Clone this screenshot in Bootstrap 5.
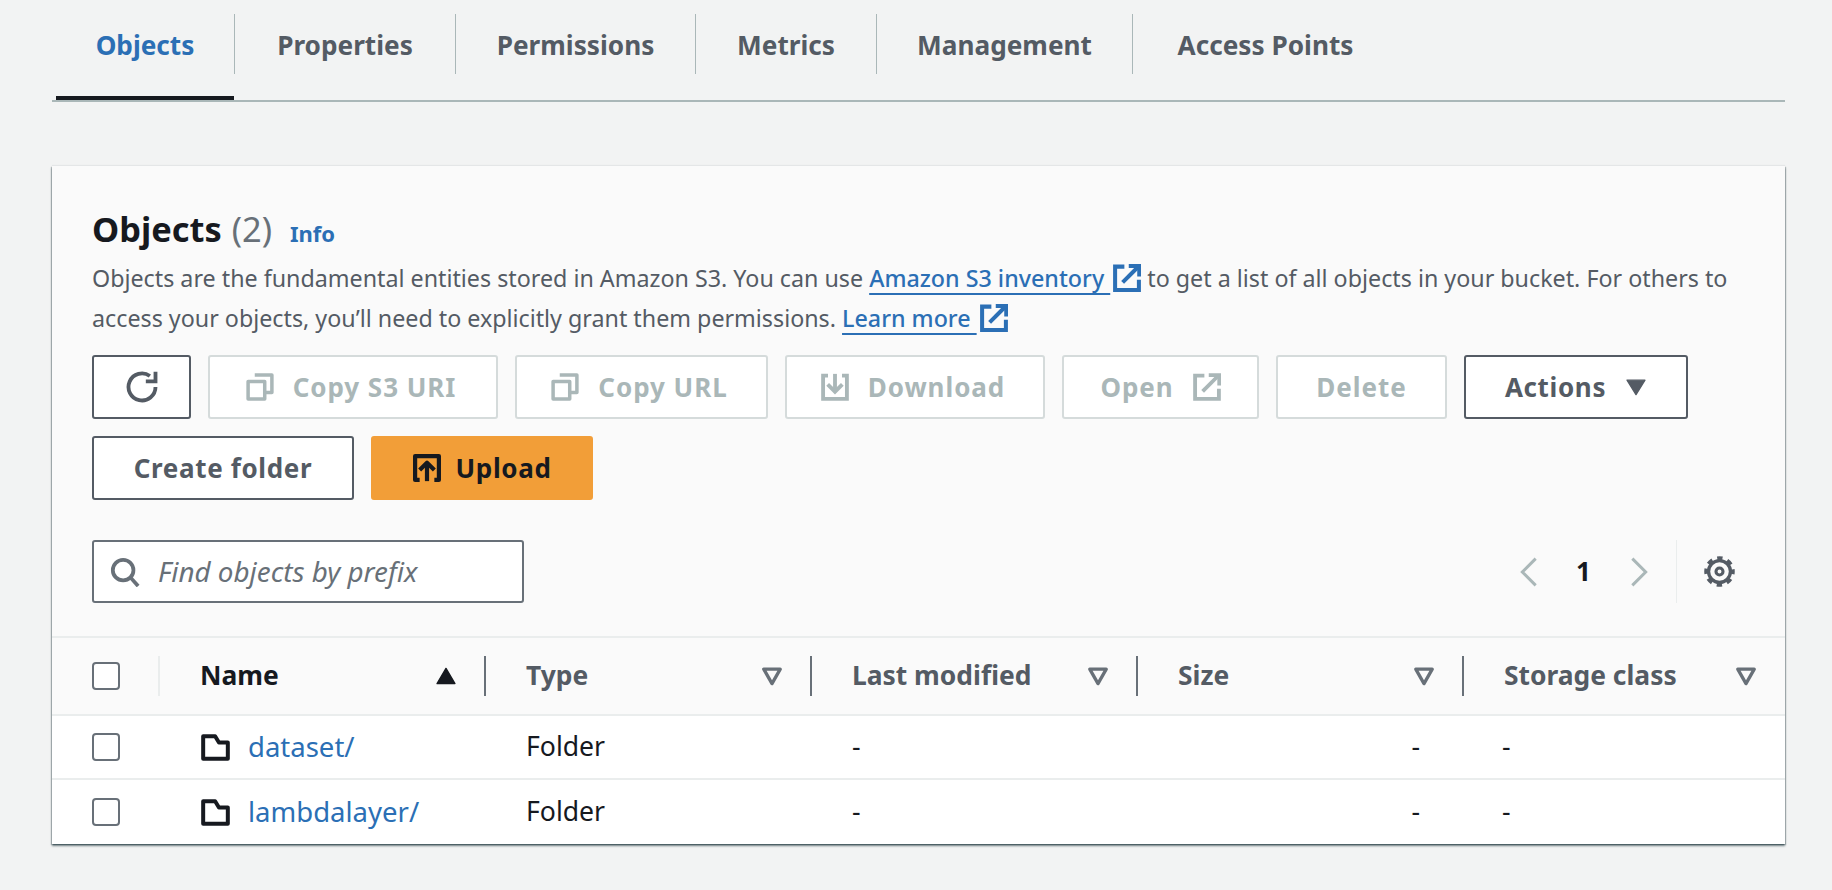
<!DOCTYPE html>
<html lang="en"><head><meta charset="utf-8"><title>Objects</title>
<link href="https://cdn.jsdelivr.net/npm/bootstrap@5.3.0/dist/css/bootstrap.min.css" rel="stylesheet">
<style>
:root{--ink:#16191f;--sub:#545b64;--mute:#687078;--off:#aab7b8;--off2:#d5dbdb;--blue:#2b6fb5;--rule:#eaeded;}
html,body{height:100%}
body{background:#f2f3f3;font-family:"Noto Sans","Open Sans",sans-serif;color:var(--ink);font-size:23px;overflow:hidden}
.shell{padding:14px 47px 0 52px}
.tabbar{border-bottom:2px solid var(--off);height:88px;align-items:flex-start;padding-left:4px;flex-wrap:nowrap}
.tabitem{height:60px;padding-top:4px;display:flex;align-items:center;justify-content:center;border-right:1.5px solid var(--off);font-weight:700;font-size:26.2px;color:var(--sub);text-decoration:none;position:relative}
.tabitem:last-child{border-right:0}
.tabitem.on{color:var(--blue)}
.tabitem.on::after{content:"";position:absolute;left:0;right:0;top:82px;height:4px;background:var(--ink)}
.t1{width:179px}.t2{width:221px}.t3{width:240px}.t4{width:181px}.t5{width:256px}.t6{width:265px}
.panel{margin-top:64px;background:#fafafa;border:0;border-radius:0;box-shadow:0 2px 2px 0 rgba(0,28,36,.5),1px 1px 1px 0 rgba(0,28,36,.22),-1px 1px 1px 0 rgba(0,28,36,.22),0 -1px 1px 0 rgba(0,28,36,.05)}
.phead{padding:38px 40px 0}
.ptitle{font-size:34.4px;font-weight:700;line-height:50px;margin:0;display:flex;align-items:baseline}
.ptitle .cnt{font-weight:400;color:var(--mute);margin-left:10px}
.ptitle a{font-size:22px;font-weight:700;color:var(--blue);text-decoration:none;margin-left:18px}
.pdesc{font-size:23.28px;line-height:40px;color:var(--sub);margin:0}
.lnk{color:var(--blue);text-decoration:none;font-weight:500;white-space:nowrap}
.lnk .ul{text-decoration:underline;text-decoration-thickness:2px;text-underline-offset:6px;text-decoration-skip-ink:none}
.ext{width:28px;height:28px;color:var(--blue);vertical-align:-5px;margin-left:3px}
.bars{gap:17px 17px;margin-top:17px;width:1640px}
.gbtn{height:64px;border:2px solid var(--sub);border-radius:3px;background:#fff;color:var(--sub);font-weight:700;font-size:26px;letter-spacing:.65px;display:flex;align-items:center;justify-content:center;gap:19px;padding:0;--bs-btn-hover-bg:#fff;white-space:nowrap}
.gbtn svg{width:28px;height:28px;flex:none}
.gbtn .spin{width:36px;height:36px}
.gbtn .drop{width:22px;height:22px}
.gbtn:disabled{border-color:var(--off2);color:var(--off);opacity:1;background:#fff;letter-spacing:.95px}
.gbtn.go{background:#f29e38;border-color:#f29e38;color:var(--ink);gap:15px}
.b1{width:99px}.b2{width:290px;padding-right:4px}.b3{width:253px;padding-right:4px}.b4{width:260px;padding-right:4px}.b5{width:197px}.b6{width:171px}.b7{width:224px}.b8{width:262px}.b9{width:222px}
.tools{margin-top:40px;padding-right:9px;align-items:center;justify-content:space-between}
.finder{width:432px;height:63px;border:2px solid var(--mute);border-radius:3px;background:#fff;display:flex;align-items:center;padding:0 16px}
.finder svg{width:30px;height:30px;flex:none;color:var(--mute)}
.finder input{border:0;outline:0;background:transparent;font-style:italic;font-size:27.8px;padding:0 0 0 18px;width:100%;color:var(--ink);box-shadow:none}
.finder input::placeholder{color:var(--mute);opacity:1}
.pager{height:63px;gap:0}
.pager .chev{width:20px;height:30px;color:var(--off)}
.pnum{font-size:26px;font-weight:700;width:90px;text-align:center}
.split{width:1.5px;height:63px;background:var(--rule);margin:0 26px 0 27px}
.cog{width:33px;height:33px;color:var(--sub)}
.grid{margin:33px 0 0;width:100%;table-layout:fixed;--bs-table-bg:transparent;border-top:2px solid var(--rule);border-collapse:separate;border-spacing:0}
.grid th,.grid td{padding:0;border-bottom:2px solid var(--rule);vertical-align:middle}
.grid tbody tr:last-child td{border-bottom:0;height:64px}
.grid th{height:78px;background:#fafafa;font-size:26.4px;color:var(--sub);font-weight:700}
.grid td{height:64px;background:#fff;font-size:26.6px;color:var(--ink);font-weight:400}
.c0{width:108px}.c1{width:326px}.c5{width:321px}
.thcell{height:40px;display:flex;align-items:center;justify-content:space-between;padding:0 27px 0 40px;border-right:2px solid var(--mute)}
.grid th:last-child .thcell{border-right:0;padding-right:28px}
.thcell svg{width:22px;height:22px;flex:none}
.thcell.act{color:var(--ink);padding-left:40px;padding-right:27px}
.c0cell{height:40px;display:flex;align-items:center;padding-left:40px;border-right:2px solid var(--rule)}
.tick{width:28px;height:28px;border:2px solid var(--mute);border-radius:4px;background:#fff;display:block}
.tickwrap{padding-left:40px}
.rowname{display:flex;align-items:center;padding-left:41px;gap:18px}
.rowname svg{width:29px;height:29px;flex:none;color:var(--ink)}
.rowname a{color:var(--blue);text-decoration:none;font-size:27.5px}
.pad{padding-left:40px!important}
.padless{padding-left:38px!important}
.dashr{text-align:right;padding-right:44px!important}
</style></head>
<body>
<div class="shell">
<nav class="nav tabbar">
<a class="tabitem on t1" href="#">Objects</a><a class="tabitem t2" href="#">Properties</a><a class="tabitem t3" href="#">Permissions</a><a class="tabitem t4" href="#">Metrics</a><a class="tabitem t5" href="#">Management</a><a class="tabitem t6" href="#">Access Points</a>
</nav>
<section class="card panel">
<div class="phead">
<h2 class="ptitle">Objects <span class="cnt">(2)</span><a href="#">Info</a></h2>
<p class="pdesc">Objects are the fundamental entities stored in Amazon S3. You can use <a class="lnk" href="#"><span class="ul">Amazon S3 inventory&nbsp;</span><svg class="ext" viewBox="0 0 16 16" fill="none" stroke="currentColor" stroke-width="2.300"><path d="M6.500 1.500H1.200v13.300h13.600V9"/><path d="M5.500 10.500l8.500-8.500"/><path d="M9 1.200h6v6"/></svg></a> to get a list of all objects in your bucket. For others to access your objects, you’ll need to explicitly grant them permissions. <a class="lnk" href="#"><span class="ul">Learn more&nbsp;</span><svg class="ext" viewBox="0 0 16 16" fill="none" stroke="currentColor" stroke-width="2.300"><path d="M6.500 1.500H1.200v13.300h13.600V9"/><path d="M5.500 10.500l8.500-8.500"/><path d="M9 1.200h6v6"/></svg></a></p>
<div class="d-flex flex-wrap bars">
<button class="btn gbtn b1" aria-label="Refresh"><svg class="spin" viewBox="0 0 16 16" fill="none" stroke="currentColor" stroke-width="1.700"><path d="M14 8A6 6 0 1 1 11.500 3.100"/><path d="M14 1.200v4.300H9.700"/></svg></button>
<button class="btn gbtn b2" disabled><svg viewBox="0 0 16 16" fill="none" stroke="currentColor" stroke-width="2" stroke-linejoin="round"><rect x="1.200" y="4.800" width="9.500" height="10"/><path d="M5 1.200h9.800v10H11"/></svg>Copy S3 URI</button>
<button class="btn gbtn b3" disabled><svg viewBox="0 0 16 16" fill="none" stroke="currentColor" stroke-width="2" stroke-linejoin="round"><rect x="1.200" y="4.800" width="9.500" height="10"/><path d="M5 1.200h9.800v10H11"/></svg>Copy URL</button>
<button class="btn gbtn b4" disabled><svg viewBox="0 0 16 16" fill="none" stroke="currentColor" stroke-width="2.200"><path d="M4 1.500H1.200v13.300h13.600V1.500H12"/><path d="M8 .5v10"/><path d="M3.800 6.500L8 10.700l4.200-4.200"/></svg>Download</button>
<button class="btn gbtn b5" disabled>Open<svg viewBox="0 0 16 16" fill="none" stroke="currentColor" stroke-width="2.200"><path d="M6.500 1.500H1.200v13.300h13.600V9"/><path d="M5.500 10.500l8.500-8.500"/><path d="M9 1.200h6v6"/></svg></button>
<button class="btn gbtn b6" disabled>Delete</button>
<button class="btn gbtn b7">Actions<svg class="drop" viewBox="0 0 16 16"><path d="M1.500 3h13L8 13.500z" fill="currentColor" stroke="currentColor" stroke-linejoin="round"/></svg></button>
<button class="btn gbtn b8">Create folder</button>
<button class="btn gbtn go b9"><svg viewBox="0 0 16 16" fill="none" stroke="currentColor" stroke-width="2.400" stroke-linejoin="round"><path d="M3.800 14.800H1.200V1.200h13.600v13.600H12.200"/><path d="M8 15.500V5.500"/><path d="M3.800 9.200L8 5l4.200 4.200"/></svg>Upload</button>
</div>
<div class="d-flex tools">
<label class="finder m-0"><svg viewBox="0 0 16 16" fill="none" stroke="currentColor" stroke-width="2"><circle cx="7" cy="7" r="5.500"/><path d="M11 11l4 4.500"/></svg><input class="form-control" placeholder="Find objects by prefix" aria-label="Find objects by prefix"></label>
<div class="d-flex align-items-center pager">
<svg class="chev" viewBox="0 0 12 18" fill="none" stroke="currentColor" stroke-width="1.800"><path d="M10 1L2 9l8 8"/></svg>
<span class="pnum">1</span>
<svg class="chev" viewBox="0 0 12 18" fill="none" stroke="currentColor" stroke-width="1.800"><path d="M2 1l8 8-8 8"/></svg>
<span class="split"></span>
<svg class="cog" viewBox="0 0 16 16" fill="none" stroke="currentColor"><circle cx="8" cy="8" r="5.300" stroke-width="1.600"/><circle cx="8" cy="8" r="6.500" stroke-width="1.800" stroke-dasharray="2.600 2.500" stroke-dashoffset="1.300"/><circle cx="8" cy="8" r="1.700" stroke-width="1.500"/></svg>
</div>
</div>
</div>
<table class="table grid">
<thead><tr>
<th class="c0"><div class="c0cell"><span class="tick"></span></div></th>
<th class="c1"><div class="thcell act">Name<svg viewBox="0 0 16 16"><path d="M1.500 13.500h13L8 2.500z" fill="currentColor" stroke="currentColor" stroke-linejoin="round"/></svg></div></th>
<th class="c1"><div class="thcell">Type<svg viewBox="0 0 16 16" fill="none" stroke="#687078" stroke-width="2.400" stroke-linejoin="round"><path d="M2 3h12L8 13.500z"/></svg></div></th>
<th class="c1"><div class="thcell">Last modified<svg viewBox="0 0 16 16" fill="none" stroke="#687078" stroke-width="2.400" stroke-linejoin="round"><path d="M2 3h12L8 13.500z"/></svg></div></th>
<th class="c1"><div class="thcell">Size<svg viewBox="0 0 16 16" fill="none" stroke="#687078" stroke-width="2.400" stroke-linejoin="round"><path d="M2 3h12L8 13.500z"/></svg></div></th>
<th class="c5"><div class="thcell">Storage class<svg viewBox="0 0 16 16" fill="none" stroke="#687078" stroke-width="2.400" stroke-linejoin="round"><path d="M2 3h12L8 13.500z"/></svg></div></th>
</tr></thead>
<tbody>
<tr><td><div class="tickwrap"><span class="tick"></span></div></td><td><div class="rowname"><svg viewBox="0 0 16 16" fill="none" stroke="currentColor" stroke-width="2.200" stroke-linejoin="round"><path d="M1.200 14.200V1.800h6.600l2.100 3.400h4.900v9z"/></svg><a href="#">dataset/</a></div></td><td class="pad">Folder</td><td class="pad">-</td><td class="dashr">-</td><td class="padless">-</td></tr>
<tr><td><div class="tickwrap"><span class="tick"></span></div></td><td><div class="rowname"><svg viewBox="0 0 16 16" fill="none" stroke="currentColor" stroke-width="2.200" stroke-linejoin="round"><path d="M1.200 14.200V1.800h6.600l2.100 3.400h4.900v9z"/></svg><a href="#">lambdalayer/</a></div></td><td class="pad">Folder</td><td class="pad">-</td><td class="dashr">-</td><td class="padless">-</td></tr>
</tbody>
</table>
</section>
</div>
</body></html>
